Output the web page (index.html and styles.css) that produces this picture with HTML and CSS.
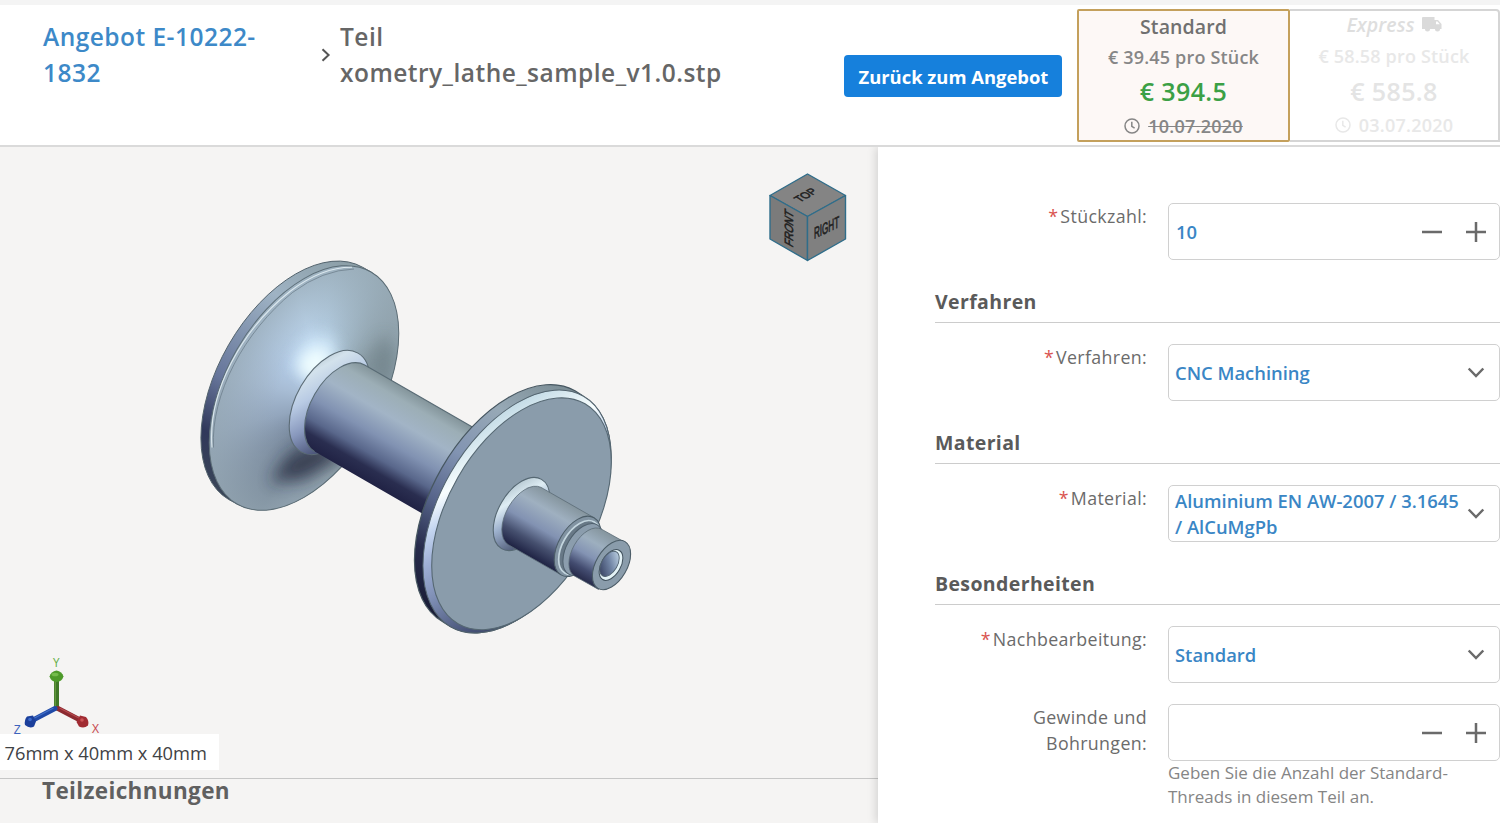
FILE: index.html
```html
<!DOCTYPE html>
<html lang="de">
<head>
<meta charset="utf-8">
<title>Teil xometry_lathe_sample_v1.0.stp</title>
<link rel="stylesheet" href="styles.css">
</head>
<body>
<header class="header">
  <nav class="crumbs">
    <a class="crumb-link">Angebot E-10222-<br>1832</a>
    <svg class="crumb-sep" width="10" height="14" viewBox="0 0 10 14"><path d="M1.5 1.2 7.6 7 1.5 12.8" fill="none" stroke="#555" stroke-width="2"/></svg>
    <div class="crumb-part">Teil<br>xometry_lathe_sample_v1.0.stp</div>
  </nav>
  <button class="back">Zurück zum Angebot</button>
  <div class="price standard">
    <div class="p-name">Standard</div>
    <div class="p-unit">€ 39.45 pro Stück</div>
    <div class="p-total">€ 394.5</div>
    <div class="p-date"><svg class="clock" width="16" height="16" viewBox="0 0 16 16"><circle cx="8" cy="8" r="7" /><path d="M7.8 3.8V8.3L10.6 10.2"/></svg><s>10.07.2020</s></div>
  </div>
  <div class="price express">
    <div class="p-name"><em>Express</em><svg class="truck" width="20" height="15" viewBox="0 0 20 15"><path d="M1 0H12.5V3H16L19.5 7V12H18A2.5 2.5 0 0 1 13 12H8A2.5 2.5 0 0 1 3 12H0V1Q0 0 1 0Z" fill="#dadada"/><path d="M14 4.5H15.5L17.8 7.3H14Z" fill="#fff"/></svg></div>
    <div class="p-unit">€ 58.58 pro Stück</div>
    <div class="p-total">€ 585.8</div>
    <div class="p-date"><svg class="clock" width="16" height="16" viewBox="0 0 16 16"><circle cx="8" cy="8" r="7" /><path d="M7.8 3.8V8.3L10.6 10.2"/></svg><span>03.07.2020</span></div>
  </div>
</header>
<main class="main">
  <section class="left">
    <div class="viewer">
      <svg class="scene" width="878" height="631" viewBox="0 147 878 631">
        <defs>
          <linearGradient id="rimL" gradientUnits="userSpaceOnUse" x1="362" y1="267" x2="228" y2="500">
            <stop offset="0" stop-color="#8b9ea6"/><stop offset=".25" stop-color="#9fb3c4"/><stop offset=".45" stop-color="#7f91ad"/><stop offset=".62" stop-color="#66759a"/><stop offset=".82" stop-color="#30385a"/><stop offset="1" stop-color="#3a4558"/>
          </linearGradient>
          <linearGradient id="rimR" gradientUnits="userSpaceOnUse" x1="575" y1="391" x2="442" y2="621">
            <stop offset="0" stop-color="#7b8d95"/><stop offset=".2" stop-color="#97a9b6"/><stop offset=".42" stop-color="#8294b2"/><stop offset=".62" stop-color="#56648a"/><stop offset=".8" stop-color="#272c4c"/><stop offset="1" stop-color="#191c36"/>
          </linearGradient>
          <linearGradient id="chamfer" gradientUnits="userSpaceOnUse" x1="583" y1="397" x2="450" y2="627">
            <stop offset="0" stop-color="#a3bac6"/><stop offset=".14" stop-color="#c3dbe6"/><stop offset=".3" stop-color="#f8feff"/><stop offset=".4" stop-color="#c3d5f0"/><stop offset=".5" stop-color="#9fb0d6"/><stop offset=".62" stop-color="#7f8fb5"/><stop offset=".8" stop-color="#465176"/><stop offset="1" stop-color="#252c48"/>
          </linearGradient>
          <linearGradient id="shaft" gradientUnits="userSpaceOnUse" x1="364.7" y1="365" x2="314.7" y2="451.6">
            <stop offset="0" stop-color="#84959b"/><stop offset=".12" stop-color="#9caeb6"/><stop offset=".32" stop-color="#a2b4c6"/><stop offset=".55" stop-color="#8192b2"/><stop offset=".74" stop-color="#59678b"/><stop offset=".87" stop-color="#2a2e50"/><stop offset="1" stop-color="#202244"/>
          </linearGradient>
          <linearGradient id="pin" gradientUnits="userSpaceOnUse" x1="541" y1="487" x2="508" y2="544">
            <stop offset="0" stop-color="#85959e"/><stop offset=".25" stop-color="#9fb0c0"/><stop offset=".55" stop-color="#8292b2"/><stop offset=".78" stop-color="#46506f"/><stop offset="1" stop-color="#1f2344"/>
          </linearGradient>
          <linearGradient id="tip" gradientUnits="userSpaceOnUse" x1="602" y1="529.5" x2="575" y2="576">
            <stop offset="0" stop-color="#85959e"/><stop offset=".28" stop-color="#9dafbf"/><stop offset=".55" stop-color="#8393b3"/><stop offset=".8" stop-color="#434c70"/><stop offset="1" stop-color="#272b4a"/>
          </linearGradient>
          <linearGradient id="fillet" gradientUnits="userSpaceOnUse" x1="358" y1="353" x2="301" y2="452">
            <stop offset="0" stop-color="#a2b4bd"/><stop offset=".2" stop-color="#d3e2ec"/><stop offset=".38" stop-color="#b9cbe4"/><stop offset=".6" stop-color="#8898bd"/><stop offset=".85" stop-color="#454e72"/><stop offset="1" stop-color="#5b6478"/>
          </linearGradient>
          <linearGradient id="filletR" gradientUnits="userSpaceOnUse" x1="541" y1="480" x2="502" y2="548">
            <stop offset="0" stop-color="#9db1bc"/><stop offset=".3" stop-color="#deedf4"/><stop offset=".52" stop-color="#9fb3cf"/><stop offset=".85" stop-color="#515d79"/><stop offset="1" stop-color="#6c7b8e"/>
          </linearGradient>
          <linearGradient id="bore" gradientUnits="userSpaceOnUse" x1="601" y1="555" x2="620" y2="573">
            <stop offset="0" stop-color="#394363"/><stop offset=".5" stop-color="#7286a6"/><stop offset="1" stop-color="#c7dbea"/>
          </linearGradient>
          <radialGradient id="fade"><stop offset=".3" stop-color="#9babb6" stop-opacity="0"/><stop offset="1" stop-color="#96a8b3" stop-opacity=".75"/></radialGradient>
          <filter id="soft" x="-80%" y="-80%" width="260%" height="260%"><feGaussianBlur stdDeviation="8"/></filter>
          <clipPath id="cone"><ellipse cx="304" cy="388" rx="134" ry="77.4" transform="rotate(-60 304 388)"/></clipPath>
        </defs>

        <!-- rear flange -->
        <path fill="url(#rimL)" stroke="#53636d" d="M362.700 267.300A134 77.4 -60 0 0 228.700 499.500L237 504A134 77.4 -60 0 0 371 272Z"/>
        <g clip-path="url(#cone)">
          <foreignObject x="200" y="255" width="210" height="265"><div class="cone-shade"></div></foreignObject>
          <ellipse cx="304" cy="388" rx="134" ry="77.4" transform="rotate(-60 304 388)" fill="url(#fade)"/>
          <path d="M366 367 384 335 396 350 392 400Z" fill="#66787f" filter="url(#soft)" opacity=".6"/>
          <path d="M318 440 288 456 270 482 304 480 346 456Z" fill="#20283a" filter="url(#soft)" opacity=".75"/>
          <ellipse cx="316" cy="355" rx="23" ry="16" transform="rotate(-42 316 355)" fill="#d4ebfb" filter="url(#soft)" opacity=".8"/>
          <ellipse cx="315" cy="364" rx="14" ry="9" transform="rotate(-42 315 364)" fill="#f2ffff" filter="url(#soft)"/>
          <ellipse cx="315" cy="364" rx="14" ry="9" transform="rotate(-42 315 364)" fill="#f2ffff" filter="url(#soft)"/>
        </g>
        <ellipse cx="304" cy="388" rx="134" ry="77.4" transform="rotate(-60 304 388)" fill="none" stroke="#5b6c75" stroke-width="1"/>
        <path d="M212 447.500C207.500 392.500 241.500 329.500 290.500 291Q322.500 267 352 267.300" fill="none" stroke="#dce8ee" stroke-width="1.1"/>
        <path d="M213.500 447.500C210.500 394.500 244.500 331.500 292.500 292.500Q322.500 270 354 269" fill="none" stroke="#677985" stroke-width=".7"/>

        <!-- main shaft -->
        <ellipse cx="329.5" cy="402.5" rx="57" ry="32.900" transform="rotate(-60 329.5 402.5)" fill="url(#fillet)" stroke="#5c6c76" stroke-width="1.1"/>
        <path d="M364.700 365 489.700 437 439.700 523.600 314.700 451.600A50 28.900 -60 0 1 364.700 365Z" fill="url(#shaft)"/>
        <path d="M489.700 437 364.700 365A50 28.900 -60 0 0 314.700 451.600" fill="none" stroke="#596b75" stroke-width="1.1"/>

        <!-- front flange -->
        <path d="M575 390.800A133 76.800 -60 0 0 442 621.200L450.500 626.700A133 76.800 -60 0 0 583.500 396.300Z" fill="url(#rimR)" stroke="#475761" stroke-width="1.200"/>
        <ellipse cx="517" cy="511.500" rx="133" ry="76.800" transform="rotate(-60 517 511.500)" fill="url(#chamfer)" stroke="#53646f" stroke-width="1"/>
        <ellipse cx="521.500" cy="513.800" rx="127" ry="73.300" transform="rotate(-60 521.500 513.800)" fill="#8a9cab" stroke="#566873" stroke-width="1.100"/>

        <!-- stepped pin -->
        <ellipse cx="521.500" cy="514" rx="40" ry="23.100" transform="rotate(-60 521.500 514)" fill="url(#filletR)" stroke="#566873" stroke-width="1.100"/>
        <path d="M541 487.400 594 517.700 561 574.800 508 544.500A33 19 -60 0 1 541 487.400Z" fill="url(#pin)" stroke="#5b6b76" stroke-width=".8"/>
        <ellipse cx="577.500" cy="546.300" rx="33" ry="19" transform="rotate(-60 577.500 546.300)" fill="#8193a2" stroke="#4c5d68" stroke-width="1.100"/>
        <ellipse cx="579.500" cy="547.500" rx="29.500" ry="17" transform="rotate(-60 579.500 547.500)" fill="#687987" stroke="#c3d5de" stroke-width="1.700"/>
        <ellipse cx="583" cy="549.500" rx="28.500" ry="16.400" transform="rotate(-60 583 549.500)" fill="#8b9dad" stroke="#4f606d" stroke-width="1"/>
        <path d="M601.500 529.200 625.500 542.600 598.500 589.400 574.500 576A27 15.600 -60 0 1 601.500 529.200Z" fill="url(#tip)" stroke="#5b6b76" stroke-width=".8"/>
        <ellipse cx="611.500" cy="565" rx="27" ry="15.600" transform="rotate(-60 611.500 565)" fill="#8a9cab" stroke="#4c5d68" stroke-width="1.100"/>
        <ellipse cx="611" cy="565" rx="16.800" ry="9.700" transform="rotate(-60 611 565)" fill="#e4f3f7" stroke="#40505c" stroke-width="1"/>
        <ellipse cx="609.500" cy="563.800" rx="13.800" ry="7.900" transform="rotate(-60 609.500 563.800)" fill="url(#bore)" stroke="#50616f" stroke-width=".9"/>

        <!-- view cube -->
        <g stroke="#2f6d8a" stroke-width="1.400" stroke-linejoin="round">
          <path d="M807.500 174 845.500 195.500 807.500 216.500 770 195.500Z" fill="#848484"/>
          <path d="M770 195.500 807.500 216.500V260.500L770 239Z" fill="#7b7b7b"/>
          <path d="M845.500 195.500 807.500 216.500V260.500L845.500 239Z" fill="#808080"/>
        </g>
        <g class="cube-text">
          <text transform="matrix(.82 -.48 .72 .46 805.500 195)" y="5" text-anchor="middle" font-size="14" textLength="22" lengthAdjust="spacingAndGlyphs">TOP</text>
          <text transform="matrix(0 -1 .85 .48 788.500 228)" y="5" text-anchor="middle" font-size="14" textLength="35" lengthAdjust="spacingAndGlyphs">FRONT</text>
          <text transform="matrix(.87 -.42 0 1 826.500 227)" y="6" text-anchor="middle" font-size="16" textLength="29" lengthAdjust="spacingAndGlyphs">RIGHT</text>
        </g>

        <!-- axis triad -->
        <g stroke-linecap="round">
          <path d="M56.500 708V680" stroke="#3f7627" stroke-width="5"/><path d="M55.300 706V682" stroke="#64983e" stroke-width="1.300"/>
          <path d="M58 708.500 80 720" stroke="#8c2a30" stroke-width="5"/><path d="M60 708.300 80 718.500" stroke="#b64a4d" stroke-width="1.200"/>
          <path d="M55 708.500 34 719.500" stroke="#2049a6" stroke-width="5"/><path d="M53 708.300 34 718.300" stroke="#4270c8" stroke-width="1.200"/>
        </g>
        <path d="M49.500 676.500Q51 671.500 56.500 670.500 62 671.500 63.500 676.500 62 681.500 56.500 682 51 681.500 49.500 676.500Z" fill="#4d9a2a"/><ellipse cx="55" cy="674.500" rx="3.500" ry="1.800" fill="#74bc4c"/>
        <path d="M80 715.500 86 717Q89.500 721 88 725.500 84 729 79 726.500L76.500 722Z" fill="#a12b32"/><circle cx="82" cy="720" r="1.800" fill="#cc5457"/>
        <path d="M33 715.500 27 716.500Q24 720 25 725 29.500 729 34 726.500L36 721.500Z" fill="#1b3f9b"/><circle cx="30" cy="719.500" r="1.800" fill="#3c6bcb"/>
        <g class="axis-text"><text x="56.300" y="667" textLength="7" lengthAdjust="spacingAndGlyphs" fill="#63ae45">Y</text><text x="17.300" y="733.500" textLength="7" lengthAdjust="spacingAndGlyphs" fill="#3d62bd">Z</text><text x="95.500" y="733" textLength="7.500" lengthAdjust="spacingAndGlyphs" fill="#c84a50">X</text></g>
      </svg>
      <div class="dims">76mm x 40mm x 40mm</div>
    </div>
    <h2 class="drawings">Teilzeichnungen</h2>
  </section>
  <section class="panel">
    <div class="row"><label><i>*</i>Stückzahl:</label><div class="field"><span class="num">10</span><svg class="steps" width="66" height="24" viewBox="0 0 66 24"><path d="M1 12H21M45 12H65M55 2V22"/></svg></div></div>
    <h3>Verfahren</h3>
    <div class="row"><label><i>*</i>Verfahren:</label><div class="field"><span>CNC Machining</span><svg class="chev" width="18" height="12" viewBox="0 0 18 12"><path d="M1.700 1.500 9 9 16.300 1.500"/></svg></div></div>
    <h3>Material</h3>
    <div class="row"><label><i>*</i>Material:</label><div class="field"><span>Aluminium EN AW-2007 / 3.1645<br>/ AlCuMgPb</span><svg class="chev" width="18" height="12" viewBox="0 0 18 12"><path d="M1.700 1.500 9 9 16.300 1.500"/></svg></div></div>
    <h3>Besonderheiten</h3>
    <div class="row"><label><i>*</i>Nachbearbeitung:</label><div class="field"><span>Standard</span><svg class="chev" width="18" height="12" viewBox="0 0 18 12"><path d="M1.700 1.500 9 9 16.300 1.500"/></svg></div></div>
    <div class="row last"><label>Gewinde und<br>Bohrungen:</label><div><div class="field"><span></span><svg class="steps" width="66" height="24" viewBox="0 0 66 24"><path d="M1 12H21M45 12H65M55 2V22"/></svg></div><p class="hint">Geben Sie die Anzahl der Standard-<br>Threads in diesem Teil an.</p></div></div>
  </section>
</main>
</body>
</html>
```
FILE: styles.css
```css
* { box-sizing: border-box; }
body { margin: 0; width: 1500px; height: 823px; overflow: hidden; background: #f5f4f3; font-family: "Open Sans", "Noto Sans", sans-serif; color: #555; }
.header { height: 147px; display: flex; align-items: flex-start; background: #fff; border-top: 5px solid #f4f4f4; border-bottom: 2px solid #dadada; white-space: nowrap; }
.crumbs { display: flex; width: 844px; padding: 14px 0 0 43px; font-size: 24.500px; letter-spacing: .47px; line-height: 35.500px; font-weight: 600; }
.crumb-link { color: #3d89c8; width: 278px; }
.crumb-sep { margin: 29px 9px 0 0; }
.crumb-part { color: #666; }
.back { width: 218px; height: 42px; margin: 50px 15px 0 .4px; padding: 0; border: 0; border-radius: 4px; background: #1680dc; color: #fff; font: 700 18.400px/43px "Open Sans", sans-serif; white-space: nowrap; }
.price { height: 133px; margin-top: 4px; text-align: center; border-radius: 2px; font-weight: 600; }
.standard { width: 213px; margin-left: -.4px; border: 2px solid #c4a05c; background: #fdf8f6; color: #707070; }
.express { width: 210px; border: 2px solid #d5d5d5; border-left: 0; border-radius: 0 4px 0 0; color: #e3e3e3; }
.p-name { font-size: 19.500px; letter-spacing: .1px; line-height: 26px; height: 32px; padding-top: 3px; }
.p-unit { font-size: 18px; letter-spacing: .18px; line-height: 26px; height: 32px; padding-top: 1px; color: #868686; }
.p-total { font-size: 25px; letter-spacing: .35px; line-height: 34px; height: 38px; margin-top: -1px; color: #3ba045; }
.p-date { margin-top: 1px; font-size: 18px; letter-spacing: .25px; line-height: 26px; display: flex; align-items: center; justify-content: center; gap: 8px; color: #868686; }
.express .p-name { padding-top: 1px; color: #dedede; }
.express .p-unit { padding-top: 0; color: #e8e8e8; }
.express .p-total { margin-top: -1px; color: #e4e4e4; }
.express .p-date { margin-top: 0; color: #e8e8e8; }
.truck { margin-left: 7px; }
.clock { fill: none; stroke: currentColor; stroke-width: 1.500; }
.main { display: flex; height: 676px; }
.left { width: 878px; }
.viewer { position: relative; height: 632px; border-bottom: 1px solid #c6c6c6; }
.scene { display: block; }
.cone-shade { width: 210px; height: 265px; background: conic-gradient(from 0deg at 128px 147px, #b6d0e6 0deg, #a1b8c8 20deg, #84969e 42deg, #7f9199 60deg, #8798a2 180deg, #76869a 198deg, #657589 212deg, #7b8ca1 232deg, #93a6bd 255deg, #a7bcd4 285deg, #b4cce7 315deg, #bfd9f2 345deg, #b6d0e6 360deg); }
.cube-text { font-family: "Liberation Sans", sans-serif; fill: #222; stroke: #222; stroke-width: .7; }
.axis-text { font: 13px "Liberation Sans", sans-serif; text-anchor: middle; }
.dims { position: absolute; left: 0; bottom: 8px; width: 219px; height: 36px; padding-left: 4.500px; background: #fff; color: #3f4245; font-size: 18.300px; line-height: 37px; white-space: nowrap; }
.drawings { margin: 0; padding-left: 42px; font-size: 22.500px; letter-spacing: .35px; line-height: 24px; color: #606060; }
.panel { position: relative; width: 622px; padding: 56px 0 0 57px; background: #fff; box-shadow: -2px 0 9px rgba(0,0,0,.14); clip-path: inset(0 0 0 -20px); white-space: nowrap; }
.row { display: flex; gap: 21px; height: 57px; }
label { width: 212px; padding-top: 1px; text-align: right; font-size: 17.800px; letter-spacing: .35px; line-height: 25.500px; color: #6b6b6b; }
label i { margin-right: 2px; color: #d9534f; font-style: normal; }
.field { width: 332px; height: 57px; display: flex; align-items: center; justify-content: space-between; padding: 0 14px 0 6px; border: 1.500px solid #d0d0d0; border-radius: 5px; color: #3a86c5; font-size: 18.400px; font-weight: 600; line-height: 25.500px; }
.num { padding-left: 1px; }
.steps, .chev { flex: none; fill: none; stroke: #6a6a6a; stroke-width: 2.500; }
.steps { margin-right: -2px; }
h3 { margin: 27px 0 21px; height: 36px; border-bottom: 1.500px solid #ccc; font-size: 19.500px; letter-spacing: .37px; line-height: 30px; color: #5a5a5a; }
.last { margin-top: 21px; }
.hint { margin: 0; font-size: 17px; line-height: 24px; color: #858585; }
```
